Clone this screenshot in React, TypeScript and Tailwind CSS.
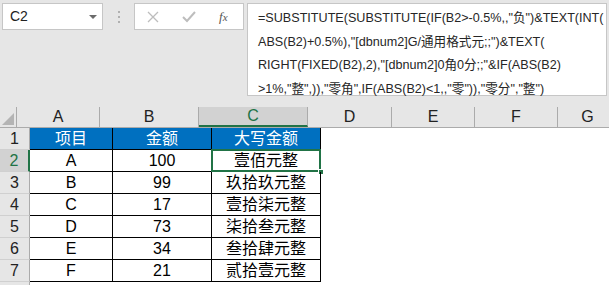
import React from 'react';

const cols = [
  { key: 'A', w: 'w-[83px]' },
  { key: 'B', w: 'w-[99px]' },
  { key: 'C', w: 'w-[109px]' },
  { key: 'D', w: 'w-[84px]' },
  { key: 'E', w: 'w-[83px]' },
  { key: 'F', w: 'w-[83px]' },
  { key: 'G', w: 'w-[60px]' },
];

const rows = [
  ['A', '100', '壹佰元整'],
  ['B', '99', '玖拾玖元整'],
  ['C', '17', '壹拾柒元整'],
  ['D', '73', '柒拾叁元整'],
  ['E', '34', '叁拾肆元整'],
  ['F', '21', '贰拾壹元整'],
];

const formula = [
  '=SUBSTITUTE(SUBSTITUTE(IF(B2>-0.5%,,"负")&TEXT(INT(',
  'ABS(B2)+0.5%),"[dbnum2]G/通用格式元;;")&TEXT(',
  'RIGHT(FIXED(B2),2),"[dbnum2]0角0分;;"&IF(ABS(B2)',
  '>1%,"整",)),"零角",IF(ABS(B2)<1,,"零")),"零分","整")',
];

const font = { fontFamily: '"Liberation Sans", "Noto Sans CJK SC", sans-serif' };

export default function App() {
  return (
    <div className="w-[609px] h-[285px] overflow-hidden bg-[#e6e6e6]" style={font}>
      {/* 名称框 + 编辑栏 */}
      <div className="flex items-start h-[107px] pt-[3px] pl-[2px] pr-[2px]">
        <div className="w-[101px] h-[27px] bg-white border border-[#c6c6c6] flex items-center justify-between pl-[7px] pr-[5px]">
          <span className="text-[14px] text-[#222]">C2</span>
          <span className="w-0 h-0 border-l-[4px] border-r-[4px] border-t-[4px] border-l-transparent border-r-transparent border-t-[#6b6b6b]" />
        </div>
        <div className="w-[31px] h-[27px] flex flex-col items-center justify-center gap-[3px]">
          <span className="w-[2px] h-[2px] bg-[#b0b0b0]" />
          <span className="w-[2px] h-[2px] bg-[#b0b0b0]" />
          <span className="w-[2px] h-[2px] bg-[#b0b0b0]" />
        </div>
        <div className="w-[110px] h-[27px] bg-white border border-[#c6c6c6] flex items-center pl-[12px]">
          <svg width="12" height="12" viewBox="0 0 12 12">
            <path d="M1 1 L11 11 M11 1 L1 11" stroke="#bdbdbd" strokeWidth="1.3" fill="none" />
          </svg>
          <svg width="14" height="12" viewBox="0 0 14 12" className="ml-[23px]">
            <path d="M1 6 L5 10 L13 1" stroke="#bdbdbd" strokeWidth="2" fill="none" />
          </svg>
          <span className="ml-[23px] text-[13px] italic text-[#555]" style={{ fontFamily: '"Liberation Serif", serif' }}>
            f<span className="text-[11px]">x</span>
          </span>
        </div>
        <div className="ml-[3px] flex-1 h-[93px] bg-white border border-[#c6c6c6] pl-[10px] pt-[3px] text-[12.6px] text-[#262626] leading-[23.5px]">
          {formula.map((l, i) => (
            <div key={i} className="whitespace-nowrap">{l}</div>
          ))}
        </div>
      </div>

      {/* 列标题 */}
      <div className="flex h-[21px] bg-[#e6e6e6] border-b border-[#ababab]">
        <div className="w-[30px] h-full border-r border-[#ababab] flex items-end justify-end p-[2px]">
          <svg width="12" height="12" viewBox="0 0 12 12">
            <path d="M12 0 L12 12 L0 12 Z" fill="#b4b4b4" />
          </svg>
        </div>
        {cols.map((c) => (
          <div
            key={c.key}
            className={`${c.w} shrink-0 h-full flex items-center justify-center text-[16px] border-r border-[#ababab] ${
              c.key === 'C' ? 'bg-[#d2d2d2] text-[#217346] border-b-2 border-b-[#217346]' : 'text-[#222]'
            }`}
          >
            {c.key}
          </div>
        ))}
      </div>

      {/* 行 */}
      <div className="bg-white">
        <Row num="1" selected={false}>
          {['项目', '金额', '大写金额'].map((t, i) => (
            <div
              key={t}
              className={`${cols[i].w} shrink-0 h-full flex items-center justify-center bg-[#0070c0] text-white text-[16px] border-r border-b border-black`}
            >
              {t}
            </div>
          ))}
        </Row>
        {rows.map((r, ri) => (
          <Row key={ri} num={String(ri + 2)} selected={ri === 0}>
            {r.map((t, i) => (
              <div
                key={i}
                className={`${cols[i].w} shrink-0 h-full relative flex items-center justify-center text-black text-[16px] border-r border-b border-black`}
              >
                {t}
                {ri === 0 && i === 2 && (
                  <div className="absolute left-[-1px] top-[-1px] right-[-1px] bottom-[-1px] border-2 border-[#217346]">
                    <div className="absolute right-[-5px] bottom-[-5px] w-[6px] h-[6px] bg-[#217346] border border-white" />
                  </div>
                )}
              </div>
            ))}
          </Row>
        ))}
        <div className="flex h-[10px]">
          <div className="w-[30px] h-full bg-[#e6e6e6] border-r border-[#ababab]" />
        </div>
      </div>
    </div>
  );
}

function Row({ num, selected, children }: { num: string; selected: boolean; children: React.ReactNode }) {
  return (
    <div className="flex h-[22px]">
      <div
        className={`w-[30px] shrink-0 h-full flex items-center justify-center text-[16px] border-b border-[#d0d0d0] ${
          selected
            ? 'bg-[#d2d2d2] text-[#217346] border-r-2 border-r-[#217346]'
            : 'bg-[#e6e6e6] text-[#222] border-r border-r-[#ababab]'
        }`}
      >
        {num}
      </div>
      {children}
    </div>
  );
}
